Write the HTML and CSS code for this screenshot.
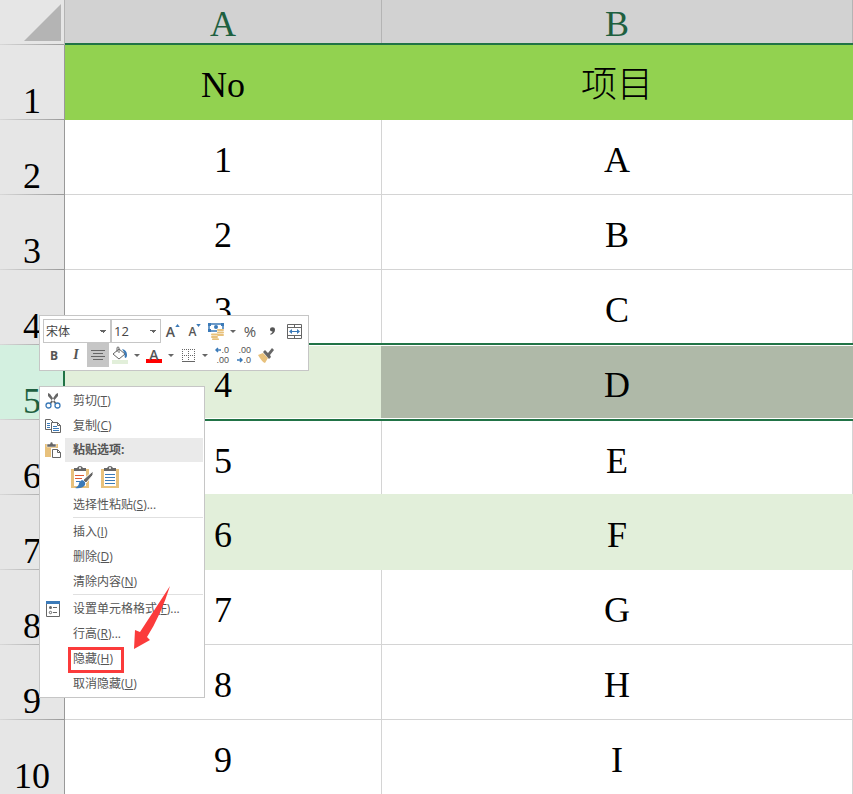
FILE: index.html
```html
<!DOCTYPE html>
<html lang="zh-CN">
<head>
    <meta charset="UTF-8">
    <meta name="viewport" content="width=device-width, initial-scale=1.0">
    <title>项目</title>
    <link rel="stylesheet" href="styles.css">
</head>
<body>
    <main class="workbook">
        <table class="sheet">
            <colgroup>
                <col class="col-index">
                <col class="col-a">
                <col class="col-b">
            </colgroup>
            <thead>
                <tr>
                    <td class="corner"><svg width="38" height="38" viewBox="0 0 38 38"><path d="M38 0V37H1Z" fill="#b4b4b4"/></svg></td>
                    <th scope="col">A</th>
                    <th scope="col">B</th>
                </tr>
            </thead>
            <tbody>
                <tr class="title-row"><th scope="row">1</th><td>No</td><td>项目</td></tr>
                <tr><th scope="row">2</th><td>1</td><td>A</td></tr>
                <tr><th scope="row">3</th><td>2</td><td>B</td></tr>
                <tr class="before-selected"><th scope="row">4</th><td>3</td><td>C</td></tr>
                <tr class="selected"><th scope="row">5</th><td>4</td><td>D</td></tr>
                <tr class="after-selected"><th scope="row">6</th><td>5</td><td>E</td></tr>
                <tr class="banded"><th scope="row">7</th><td>6</td><td>F</td></tr>
                <tr><th scope="row">8</th><td>7</td><td>G</td></tr>
                <tr><th scope="row">9</th><td>8</td><td>H</td></tr>
                <tr><th scope="row">10</th><td>9</td><td>I</td></tr>
            </tbody>
        </table>

        <!-- mini toolbar -->
        <div class="mini-toolbar">
            <div class="tool-row">
                <select class="font-name" aria-label="字体"><option>宋体</option></select>
                <select class="font-size" aria-label="字号"><option>12</option></select>
                <button class="tool grow" aria-label="增大字号">A<svg width="5" height="3" viewBox="0 0 6 4"><path d="M0 4L3 0L6 4Z" fill="#3b7ab8"/></svg></button>
                <button class="tool shrink" aria-label="减小字号">A<svg width="5" height="3" viewBox="0 0 6 4"><path d="M0 0L3 4L6 0Z" fill="#3b7ab8"/></svg></button>
                <button class="tool" aria-label="会计数字格式">
                    <svg width="18" height="18" viewBox="0 0 18 18">
                        <path d="M2 2H16V9H2Z" fill="#fff" stroke="#3b7ab8" stroke-width="1.5"/>
                        <path d="M1 1h3v3H1zM14 1h3v3h-3zM1 7h3v3H1z" fill="#3b7ab8"/>
                        <circle cx="9" cy="5" r="2" fill="#3b7ab8"/>
                        <path d="M10 7H18V18H4V11H10Z" fill="#fff"/>
                        <path d="M11 8h5M11 10.500h5M11 13h5M5 12.500h5M5 15h5M6 17.200h5" stroke="#e8c17c" stroke-width="2" stroke-linecap="round"/>
                    </svg>
                </button>
                <button class="caret" aria-label="更多数字格式"></button>
                <button class="tool percent">%</button>
                <button class="tool" aria-label="千位分隔样式">
                    <svg width="5" height="8" viewBox="0 0 6 9"><path d="M3 0C5 0 6 1 6 3C6 6 4 8 1 9L0 8C2 7 3 6 3 5C1 5 0 4 0 3C0 1 1 0 3 0Z" fill="#555"/></svg>
                </button>
                <button class="tool" aria-label="合并后居中">
                    <svg width="15" height="15" viewBox="0 0 15 15" fill="none">
                        <path d="M.5 .5H14.5V14.5H.5ZM.5 3.5H14.5M.5 11.5H14.5M7.5 .5V3.5M7.5 11.5V14.5" stroke="#666"/>
                        <path d="M3 7.5H12" stroke="#3b7ab8"/>
                        <path d="M2 7.5L5 5V10ZM13 7.5L10 5V10Z" fill="#3b7ab8"/>
                    </svg>
                </button>
            </div>
            <div class="tool-row">
                <button class="tool bold">B</button>
                <button class="tool italic">I</button>
                <button class="tool pressed" aria-label="居中">
                    <svg width="14" height="11" viewBox="0 0 14 11"><path d="M0 .5H14M2 3.5H12M0 6.5H14M2 9.5H12" stroke="#666"/></svg>
                </button>
                <button class="tool" aria-label="填充颜色">
                    <svg width="16" height="18" viewBox="0 0 16 18">
                        <path d="M7 3L13 8L7 13L1 8ZM5 6V2Q5 1 6 1Q7 1 7 2V7" fill="#fff" stroke="#666"/>
                        <path d="M10 3Q15 4 15 9Q15 12 13 12Q12 10 13 8Z" fill="#3b7ab8"/>
                        <path d="M0 14H16V18H0Z" fill="#e2efda"/>
                    </svg>
                </button>
                <button class="caret" aria-label="更多填充颜色"></button>
                <button class="tool font-color" aria-label="字体颜色">A</button>
                <button class="caret" aria-label="更多字体颜色"></button>
                <button class="tool" aria-label="边框">
                    <svg width="13" height="13" viewBox="0 0 13 13" fill="none" stroke="#666"><path d="M0 .5H13M0 6.5H13M.5 0V12M6.5 0V12M12.5 0V12" stroke-dasharray="1 1"/><path d="M0 12.5H13"/></svg>
                </button>
                <button class="caret" aria-label="更多边框"></button>
                <button class="tool decimals" aria-label="增加小数位数">
                    <span><svg width="6" height="6" viewBox="0 0 6 6"><path d="M6 3H1M3 1L1 3L3 5" fill="none" stroke="#3b7ab8" stroke-width="1.5"/></svg>.0</span><span>.00</span>
                </button>
                <button class="tool decimals" aria-label="减少小数位数">
                    <span>.00</span><span><svg width="6" height="6" viewBox="0 0 6 6"><path d="M0 3H5M3 1L5 3L3 5" fill="none" stroke="#3b7ab8" stroke-width="1.5"/></svg>.0</span>
                </button>
                <button class="tool" aria-label="格式刷">
                    <svg width="16" height="15" viewBox="0 0 16 15">
                        <path d="M0 7L5 5L10 10L7 15Q4 14 0 7Z" fill="#e8c17c"/>
                        <path d="M5 4L7 2L10 5L14 0L16 2L12 7L13 9L11 11Z" fill="#666"/>
                    </svg>
                </button>
            </div>
        </div>

        <!-- context menu -->
        <div class="context-menu" role="menu">
            <button class="item" role="menuitem">
                <svg class="icon" width="16" height="16" viewBox="0 0 16 16" fill="none">
                    <path d="M3 0L5 1L12 11L10 11L3 3ZM13 0L11 1L4 11L6 11L13 3Z" fill="#666"/>
                    <circle cx="3.5" cy="12.5" r="2.5" stroke="#3b7ab8" stroke-width="1.3"/>
                    <circle cx="12.5" cy="12.5" r="2.5" stroke="#3b7ab8" stroke-width="1.3"/>
                </svg>
                <span>剪切(<u>T</u>)</span>
            </button>
            <button class="item" role="menuitem">
                <svg class="icon" width="16" height="16" viewBox="0 0 16 16" fill="none">
                    <path d="M.5 1.5H5.5L8.5 4.5V11.5H.5Z" fill="#fff" stroke="#666"/>
                    <path d="M2 5.5H5M2 7.5H5M2 9.5H5" stroke="#3b7ab8"/>
                    <path d="M6.5 4.5H12.5L15.5 7.5V14.5H6.5Z" fill="#fff" stroke="#666"/>
                    <path d="M12.5 4.5V7.5H15.5" stroke="#666"/>
                    <path d="M8 8.5H12M8 10.5H14M8 12.5H14" stroke="#3b7ab8"/>
                </svg>
                <span>复制(<u>C</u>)</span>
            </button>
            <div class="item heading">
                <svg class="icon" width="16" height="16" viewBox="0 0 16 16">
                    <path d="M0 2H13V15H0Z" fill="#e8c17c"/>
                    <path d="M2 5V2H5Q5 0 6.5 0Q8 0 8 2H11V5Z" fill="#666" stroke="#fff" stroke-width=".5"/>
                    <path d="M6 6H16V16H6Z" fill="#fff"/>
                    <path d="M7.5 7.5H12.5L15.5 10.5V15.5H7.5ZM12.5 7.5V10.5H15.5" fill="#fff" stroke="#666"/>
                </svg>
                <span>粘贴选项:</span>
            </div>
            <div class="paste-options">
                <button class="paste" aria-label="粘贴">
                    <svg width="22" height="23" viewBox="0 0 22 23" fill="none">
                        <path d="M0 3H18V22H0Z" fill="#e8c17c"/><path d="M3 5H15V20H3Z" fill="#fff"/>
                        <path d="M3 5V2H6Q7 0 9 0Q11 0 12 2H15V5Z" fill="#666"/><circle cx="9" cy="2" r="1" fill="#fff"/>
                        <path d="M4 9L5 10L6 9L7 10L8 9L9 10L10 9L11 10L12 9L13 10M4 12L5 13L6 12L7 13L8 12L9 13L10 12L11 13" stroke="#dd5b34"/>
                        <path d="M5 15.5H9" stroke="#3b7ab8"/>
                        <path d="M22 5V9L15 17L12 14Z" fill="#666" stroke="#fff"/>
                        <path d="M11 14Q15 15 14 19Q11 23 4 22Q8 20 8 17Q9 15 11 14Z" fill="#3b7ab8"/>
                    </svg>
                </button>
                <button class="paste" aria-label="粘贴值">
                    <svg width="22" height="23" viewBox="0 0 22 23" fill="none">
                        <path d="M0 3H18V22H0Z" fill="#e8c17c"/><path d="M3 5H15V20H3Z" fill="#fff"/>
                        <path d="M3 5V2H6Q7 0 9 0Q11 0 12 2H15V5Z" fill="#666"/><circle cx="9" cy="2" r="1" fill="#fff"/>
                        <path d="M4 8.5H14M4 11.5H14M4 14.5H14M4 17.5H14" stroke="#3b7ab8"/>
                    </svg>
                </button>
            </div>
            <button class="item" role="menuitem"><span>选择性粘贴(<u>S</u>)...</span></button>
            <hr>
            <button class="item" role="menuitem"><span>插入(<u>I</u>)</span></button>
            <button class="item" role="menuitem"><span>删除(<u>D</u>)</span></button>
            <button class="item" role="menuitem"><span>清除内容(<u>N</u>)</span></button>
            <hr>
            <button class="item" role="menuitem">
                <svg class="icon" width="14" height="16" viewBox="0 0 14 16" fill="none">
                    <path d="M.5 .5H13.5V15.5H.5Z" fill="#fff" stroke="#666"/>
                    <path d="M0 0H14V3H0Z" fill="#3b7ab8"/>
                    <circle cx="4.5" cy="6.5" r="1.5" fill="#666"/><circle cx="4.5" cy="11.5" r="1.2" stroke="#666"/>
                    <path d="M7 6.5H11M7 11.5H11" stroke="#666"/>
                </svg>
                <span>设置单元格格式(<u>F</u>)...</span>
            </button>
            <button class="item" role="menuitem"><span>行高(<u>R</u>)...</span></button>
            <button class="item marked" role="menuitem"><span>隐藏(<u>H</u>)</span></button>
            <button class="item" role="menuitem"><span>取消隐藏(<u>U</u>)</span></button>
            <svg class="arrow" width="38" height="64" viewBox="0 0 38 64"><path d="M36 0L6 46L1 44L0 63L16 54L13 51Q27 29 36 0Z" fill="#fb3b3b"/></svg>
        </div>
    </main>
</body>
</html>
```
FILE: styles.css
```css
body {
    margin: 0;
    background: white;
    color: #555;
    font-family: "Open Sans", "Noto Sans CJK SC", sans-serif;
    font-size: 12px;
}

.workbook {
    position: relative;
    height: 100vh;
    overflow: hidden;
}

/* Sheet */
.sheet {
    width: 100%;
    table-layout: fixed;
    border-collapse: separate;
    border-spacing: 0;
    color: black;
    font-family: "Liberation Serif", "Noto Sans CJK SC", serif;
    font-size: 36px;
    line-height: 38px;
}

.col-index {
    width: 65px;
}

.col-a {
    width: 317px;
}

.sheet th,
.sheet td {
    box-sizing: border-box;
    height: 75px;
    padding: 6px 1px 0 0;
    border-bottom: 1px solid #d4d4d4;
    box-shadow: inset -1px 0 #d4d4d4;
    font-weight: 300;
    text-align: center;
    vertical-align: middle;
}

.sheet thead th {
    height: 45px;
    padding: 5px 1px 0 0;
    background: #d2d2d2;
    border-bottom: 2px solid #217346;
    box-shadow: inset -1px 0 #b4b4b4;
    color: #1e6040;
}

.sheet tbody th,
.sheet .corner {
    padding: 0 1px 0 0;
    border-bottom: 0;
    background: linear-gradient(to right, #d8d8d8, #999) bottom / 100% 1px no-repeat #e6e6e6;
    box-shadow: inset -1px 0 #999;
    vertical-align: bottom;
}

.sheet .corner {
    height: 45px;
    padding: 0 4px 3px 0;
    box-shadow: inset -1px 0 #b4b4b4;
    line-height: 0;
    text-align: right;
}

.sheet .title-row td {
    background: #92d250;
    border-color: #92d250;
    box-shadow: none;
}

.sheet .banded td {
    background: #e2efda;
    border-color: #e2efda;
    box-shadow: none;
}

.sheet .before-selected td {
    border-bottom: 2px solid #217346;
}

.sheet .selected th {
    background-color: #d3f0e0;
    box-shadow: inset -2px 0 #217346;
    color: #1e6040;
}

.sheet .selected td {
    background: #afb9a8;
    border-bottom-color: #217346;
    box-shadow: inset 0 1px white, inset 0 -1px white;
}

.sheet .selected th + td {
    background: #e2efda;
    box-shadow: inset 0 1px white, inset 0 -1px white, inset -1px 0 #afb9a8;
}

.sheet .after-selected td {
    border-top: 1px solid #217346;
    border-bottom-color: #e2efda;
}

/* Floating panels */
.mini-toolbar,
.context-menu {
    position: absolute;
    left: 39px;
    box-sizing: border-box;
    background: white;
    border: 1px solid #c6c6c6;
}

.mini-toolbar {
    top: 315px;
    width: 270px;
    padding: 3px 2px 3px 3px;
}

.tool-row {
    display: flex;
    height: 24px;
}

button {
    margin: 0;
    padding: 0;
    border: 0;
    background: none;
    color: inherit;
    font: inherit;
}

select {
    box-sizing: border-box;
    height: 24px;
    padding: 0 2px;
    appearance: none;
    border: 1px solid #c6c6c6;
    border-radius: 0;
    background-color: white;
    background-image: linear-gradient(to top right, transparent 50%, #666 50%), linear-gradient(to top left, transparent 50%, #666 50%);
    background-position: right 7px center, right 4px center;
    background-repeat: no-repeat;
    background-size: 3px 3px;
    color: #444;
    font: 12px "Open Sans", "Noto Sans CJK SC", sans-serif;
}

.font-name {
    width: 68px;
}

.font-size {
    width: 50px;
    font-size: 13px;
}

.tool {
    display: flex;
    align-items: center;
    justify-content: center;
    width: 22px;
    height: 24px;
}

.caret {
    display: flex;
    align-items: center;
    justify-content: center;
    width: 12px;
}

.caret::before {
    content: "";
    border: 3px solid transparent;
    border-top-color: #666;
    border-bottom: 0;
}

.grow,
.shrink {
    padding-left: 2px;
    font-weight: 600;
    font-size: 14px;
}

.shrink {
    font-size: 12px;
}

.grow svg,
.shrink svg {
    align-self: flex-start;
    margin-top: 5px;
}

.percent {
    font-size: 15px;
}

.bold {
    font-weight: bold;
}

.italic {
    font-family: "Liberation Serif", serif;
    font-size: 14px;
    font-style: italic;
    font-weight: bold;
}

.pressed {
    background: #c6c6c6;
}

.font-color {
    font-size: 14px;
    font-weight: 600;
    line-height: 16px;
    background: linear-gradient(red, red) center bottom 4px / 16px 4px no-repeat;
}

.decimals {
    flex-direction: column;
    align-items: flex-end;
    padding-right: 4px;
    font-family: "Liberation Sans", sans-serif;
    font-size: 9px;
    line-height: 10px;
}

.context-menu {
    top: 386px;
    width: 166px;
    padding: 1px;
}

.item {
    display: grid;
    grid-template-columns: 24px 1fr;
    align-items: center;
    width: 100%;
    height: 25px;
    text-align: left;
    line-height: 24px;
}

.item span {
    grid-column: 2;
    padding-left: 8px;
}

.item u {
    text-underline-offset: 1px;
}

.icon {
    grid-row: 1;
    justify-self: center;
}

.heading {
    align-items: start;
    font-weight: bold;
}

.heading span {
    background: #eaeaea;
}

.heading .icon {
    margin-top: 4px;
}

.paste-options {
    display: flex;
    align-items: center;
    gap: 8px;
    height: 29px;
    padding-left: 30px;
}

.paste {
    display: flex;
}

hr {
    height: 1px;
    margin: 0 0 1px 32px;
    border: 0;
    background: #e0e0e0;
}

/* Callout around the hide command */
.marked {
    position: relative;
}

.marked::after {
    content: "";
    position: absolute;
    top: 1px;
    left: 27px;
    box-sizing: border-box;
    width: 56px;
    height: 26px;
    border: 3px solid #fb3b3b;
}

.arrow {
    position: absolute;
    top: 199px;
    left: 94px;
}
```
